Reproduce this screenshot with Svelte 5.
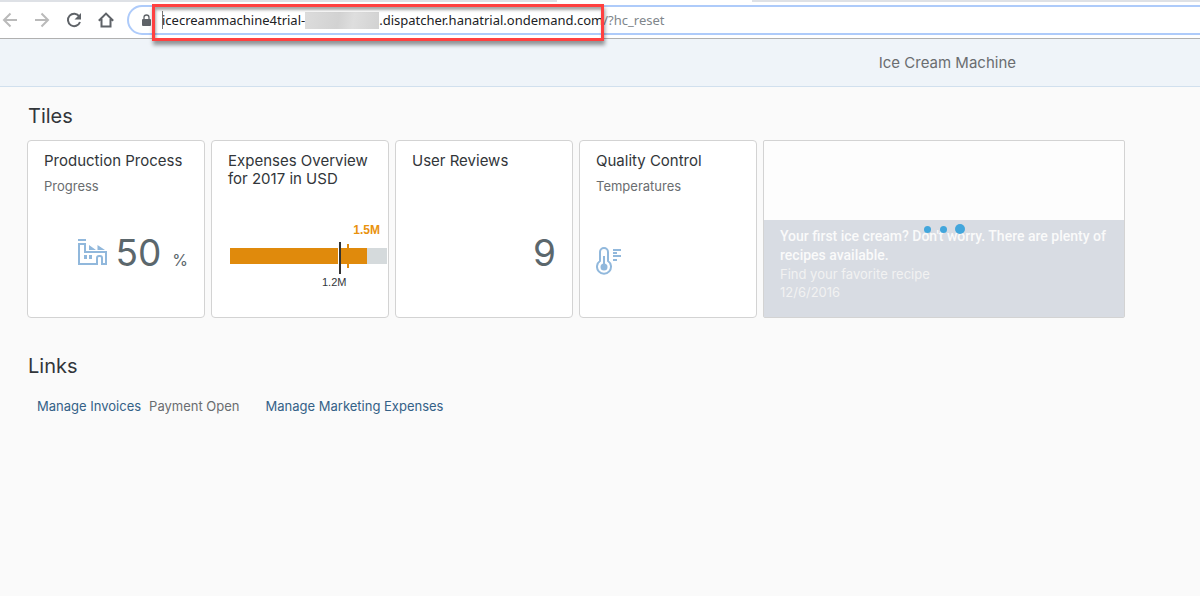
<script>
  let path = $state('/?hc_reset');
</script>

<div class="tabs"><span class="tab"></span></div>
<nav class="toolbar" aria-label="Browser">
  <button class="nav dim" aria-label="Back">
    <svg viewBox="0 0 16 16"><path d="M15 8H2M8.5 1.5L2 8l6.500 6.500" /></svg>
  </button>
  <button class="nav dim" aria-label="Forward">
    <svg viewBox="0 0 16 16"><path d="M1 8h13M7.500 1.500L14 8l-6.500 6.500" /></svg>
  </button>
  <button class="nav" aria-label="Reload">
    <svg viewBox="0 0 16 16"><path d="M13.300 4.500A6.200 6.200 0 1 0 14 10" /><path class="solid" d="M15 1v6.500H8.500z" /></svg>
  </button>
  <button class="nav" aria-label="Home">
    <svg viewBox="0 0 16 16"><path d="M.8 8.800L8 1.600l7.200 7.200M3.500 7v7.500h9V7" /></svg>
  </button>
  <div class="omnibox">
    <svg class="lock" viewBox="0 0 10 13"><path d="M2 5h7q1 0 1 1v5q0 1-1 1H2q-1 0-1-1V6q0-1 1-1z" fill="#5f6368" /><path d="M3 5.500V3.500a2.500 2.500 0 0 1 5 0v2" fill="none" stroke="#5f6368" stroke-width="1.300" /></svg>
    <label class="host" for="path"><span class="caret"></span>icecreammachine4trial-<span class="redacted"></span>.dispatcher.hanatrial.ondemand.com<span class="marker"></span></label>
    <input id="path" bind:value={path} spellcheck="false" />
  </div>
</nav>

<header><span>Ice Cream Machine</span></header>

<main>
  <h2>Tiles</h2>
  <div class="tiles">
    <article class="tile">
      <h3>Production Process</h3>
      <p class="sub">Progress</p>
      <div class="content end">
        <svg class="factory" viewBox="0 0 30 28" fill="#91b8dc">
          <path d="M0 0h8v2H0zM11 6l7 5h-7zM19.500 6l7.500 5h-7.500zM6 16h3v4H6zM11 16h3v4h-3z" />
          <path d="M1 5h6v8h21v12h-4v-6q0-2-2-2h-1q-2 0-2 2v6H1z" fill="none" stroke="#91b8dc" stroke-width="2" />
        </svg>
        <span class="value">50</span><span class="unit">%</span>
      </div>
    </article>
    <article class="tile">
      <h3>Expenses Overview for 2017 in USD</h3>
      <div class="chart">
        <span class="actual">1.5M</span>
        <svg class="bullet" viewBox="0 0 157 32" aria-hidden="true">
          <path fill="#d5dadc" d="M0 6h157v16H0z" />
          <path fill="#e08a0c" d="M0 6h137v16H0zM117 2h2v24h-2z" />
          <path fill="#fff" d="M108 6h3v16h-3z" />
          <path fill="#333" d="M109 0h2v32h-2z" />
        </svg>
        <span class="target">1.2M</span>
      </div>
    </article>
    <article class="tile">
      <h3>User Reviews</h3>
      <div class="content end"><span class="value">9</span></div>
    </article>
    <article class="tile">
      <h3>Quality Control</h3>
      <p class="sub">Temperatures</p>
      <div class="content low">
        <svg class="thermo" viewBox="0 0 26 30" fill="none" stroke="#91b8dc" stroke-width="2">
          <path d="M4 14V5a4 4 0 0 1 8 0v9a7 7 0 1 1-8 0z" />
          <circle cx="8" cy="20" r="3.500" fill="#91b8dc" stroke="none" />
          <path d="M8 9v10M17 3H25M17 6h4M17 9H25M17 13h4" />
        </svg>
      </div>
    </article>
    <article class="tile wide">
      <div class="news">
        <strong>Your first ice cream? Don't worry. There are plenty of recipes available.</strong>
        <span>Find your favorite recipe</span>
        <span>12/6/2016</span>
      </div>
      <div class="busy" aria-label="Loading"><i></i><i></i><i class="big"></i></div>
    </article>
  </div>

  <h2 class="linkhead">Links</h2>
  <div class="links">
    <div><a href="#invoices">Manage Invoices</a><span>Payment Open</span></div>
    <div><a href="#marketing">Manage Marketing Expenses</a></div>
  </div>
</main>

<style>
  :global(body) {
    margin: 0;
    background: #fafafa;
    color: #32363a;
    font-family: Inter, sans-serif;
    overflow-x: hidden;
  }
  .tabs {
    height: 2px;
    background: #dee1e6;
    padding-left: 557px;
  }
  .tab {
    display: block;
    width: 195px;
    height: 2px;
    background: #fff;
  }
  .toolbar {
    display: flex;
    align-items: center;
    box-sizing: border-box;
    height: 37px;
    padding-left: 2px;
    background: #fff;
    border-bottom: 1px solid #b0b0b0;
  }
  .nav {
    width: 16px;
    height: 16px;
    margin-right: 16px;
    padding: 0;
    border: 0;
    background: none;
    flex: none;
    color: #5f6368;
  }
  .dim {
    color: #bababa;
  }
  .nav svg {
    display: block;
    fill: none;
    stroke: currentColor;
    stroke-width: 2;
  }
  .nav .solid {
    fill: currentColor;
    stroke: none;
  }
  .omnibox {
    flex: 1;
    display: flex;
    align-items: center;
    box-sizing: border-box;
    height: 30px;
    margin: 0 -20px 0 -3px;
    padding-left: 12px;
    border: 2px solid #aecbfa;
    border-radius: 15px;
    font: 13px/20px "Noto Sans", sans-serif;
    color: #202124;
  }
  .lock {
    width: 10px;
    height: 13px;
    margin-right: 11px;
    flex: none;
  }
  .host {
    position: relative;
    display: flex;
    align-items: center;
    white-space: nowrap;
  }
  .caret {
    width: 1px;
    height: 18px;
    margin-right: -1px;
    background: #777;
  }
  .redacted {
    width: 74px;
    height: 17px;
    background: linear-gradient(100deg, #dcdcdc, #d2d2d2 45%, #dedede 65%, #d2d2d2);
  }
  .marker {
    position: absolute;
    inset: -6px -1px -11px -10px;
    border: 3px solid #ff4040;
    box-shadow: 1px 4px 4px rgba(0, 0, 0, 0.4), inset 1px 3px 3px rgba(0, 0, 0, 0.35);
  }
  .omnibox input {
    flex: 1;
    min-width: 0;
    padding: 0;
    border: 0;
    outline: 0;
    background: none;
    font: inherit;
    color: #80868b;
  }
  header {
    display: flex;
    justify-content: flex-end;
    align-items: center;
    box-sizing: border-box;
    height: 48px;
    padding-right: 184px;
    background: #eff4f9;
    border-bottom: 1px solid #d1e0ee;
    font-size: 15px;
    color: #6a6d70;
  }
  main {
    padding: 16px 27px;
  }
  h2 {
    margin: 0 1px 11px;
    font-size: 20px;
    line-height: 26px;
    font-weight: 400;
  }
  .tiles {
    display: flex;
    flex-wrap: wrap;
    gap: 6px;
  }
  .tile {
    position: relative;
    display: flex;
    flex-direction: column;
    box-sizing: border-box;
    width: 178px;
    height: 178px;
    padding: 11px 16px;
    background: #fff;
    border: 1px solid #d3d3d3;
    border-radius: 4px;
  }
  h3 {
    margin: 0;
    font-size: 15px;
    line-height: 18px;
    font-weight: 400;
  }
  .sub {
    margin: 7px 0 0;
    font-size: 13px;
    line-height: 18px;
    color: #6a6d70;
  }
  .content {
    display: flex;
    align-items: center;
    height: 44px;
    margin-top: auto;
    margin-bottom: 31px;
  }
  .low {
    margin-bottom: 22px;
  }
  .end {
    justify-content: flex-end;
    color: #5b676c;
  }
  .value {
    font-size: 37px;
    line-height: 44px;
  }
  .unit {
    margin-left: 11px;
    padding-bottom: 5px;
    align-self: flex-end;
    font-size: 16px;
    line-height: 20px;
  }
  .factory {
    width: 30px;
    height: 28px;
    margin-right: 7px;
  }
  .thermo {
    width: 26px;
    height: 30px;
  }
  .chart {
    display: flex;
    flex-direction: column;
    margin: auto -15px 16px 2px;
    font: 11px/16px "Liberation Sans", sans-serif;
  }
  .actual {
    align-self: flex-end;
    margin: 0 7px 4px 0;
    font-size: 12px;
    font-weight: 700;
    color: #e9920e;
  }
  .bullet {
    width: 157px;
    height: 32px;
  }
  .target {
    margin-left: 92px;
  }
  .wide {
    width: 362px;
    padding: 0;
    justify-content: flex-end;
    background: #fdfdfd;
    border-radius: 2px;
  }
  .news {
    display: flex;
    flex-direction: column;
    box-sizing: border-box;
    height: 97px;
    padding: 7px 16px;
    background: #d8dce3;
    color: #f2f2f2;
    font-size: 13px;
    line-height: 18px;
  }
  .news strong {
    font: 500 14px/19px Roboto, sans-serif;
    color: #fafafa;
  }
  .busy {
    position: absolute;
    top: 83px;
    left: 50%;
    display: flex;
    align-items: center;
    gap: 9px;
    margin-left: -20px;
  }
  .busy i {
    width: 7px;
    height: 7px;
    border-radius: 50%;
    background: #42a6dc;
  }
  .busy .big {
    width: 10px;
    height: 10px;
    margin-left: -1px;
  }
  .linkhead {
    margin-top: 35px;
  }
  .links {
    display: flex;
    gap: 26px;
    padding: 7px 10px;
    font-size: 13px;
    line-height: 18px;
    color: #6a6d70;
  }
  .links div {
    display: flex;
    gap: 8px;
  }
  a {
    color: #346187;
    text-decoration: none;
  }
</style>
